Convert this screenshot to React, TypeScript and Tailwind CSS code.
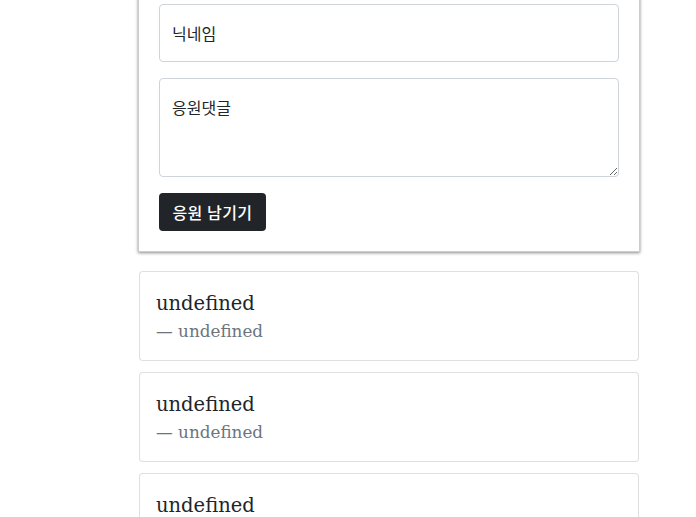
import React from "react";

const sans = "font-['Segoe_UI','Noto_Sans','Noto_Sans_CJK_KR',sans-serif]";
const serif = "font-['DejaVu_Serif','Noto_Sans_CJK_KR',serif]";

function Comment() {
  return (
    <div className="w-[500px] ml-[139px] mb-[11px] border border-[rgba(0,0,0,0.125)] rounded-[4px] bg-white">
      <div className="px-4 pt-[17px] pb-[16px]">
        <div className={`${serif} text-[19.5px] leading-[30px] text-[#212529]`}>undefined</div>
        <div className={`${serif} text-[16.8px] leading-[25px] text-[#6c757d]`}>— undefined</div>
      </div>
    </div>
  );
}

export default function App() {
  return (
    <div className={`${sans} w-[696px] h-[517px] overflow-hidden bg-white text-[#212529]`}>
      <div className="w-[502px] ml-[138px] -mt-[17px] border border-[rgba(0,0,0,0.2)] bg-white shadow-[0_1px_3px_rgba(0,0,0,0.45)] p-5">
        <div className="relative mb-4">
          <input
            className="block w-full h-[58px] border border-[#ced4da] rounded-[4px] px-3 pt-4 pb-4 text-base outline-none bg-white"
            aria-label="닉네임"
          />
          <label className="absolute left-0 top-0 px-3 py-4 leading-6 text-base text-[#212529] font-['Noto_Sans_CJK_KR',sans-serif] pointer-events-none border border-transparent">
            닉네임
          </label>
        </div>
        <div className="relative mb-4">
          <textarea
            className="block w-full h-[99px] border border-[#ced4da] rounded-[4px] px-3 py-4 text-base outline-none bg-white"
            aria-label="응원댓글"
          />
          <label className="absolute left-0 top-0 px-3 py-4 leading-6 text-base text-[#212529] font-['Noto_Sans_CJK_KR',sans-serif] pointer-events-none border border-transparent">
            응원댓글
          </label>
        </div>
        <button className="h-[38px] w-[107px] px-3 rounded-[4px] bg-[#212529] text-white text-base leading-6 font-medium tracking-[0.5px] font-['Noto_Sans_CJK_KR',sans-serif]">
          응원 남기기
        </button>
      </div>
      <div className="h-[19px]" />
      <Comment />
      <Comment />
      <Comment />
    </div>
  );
}
